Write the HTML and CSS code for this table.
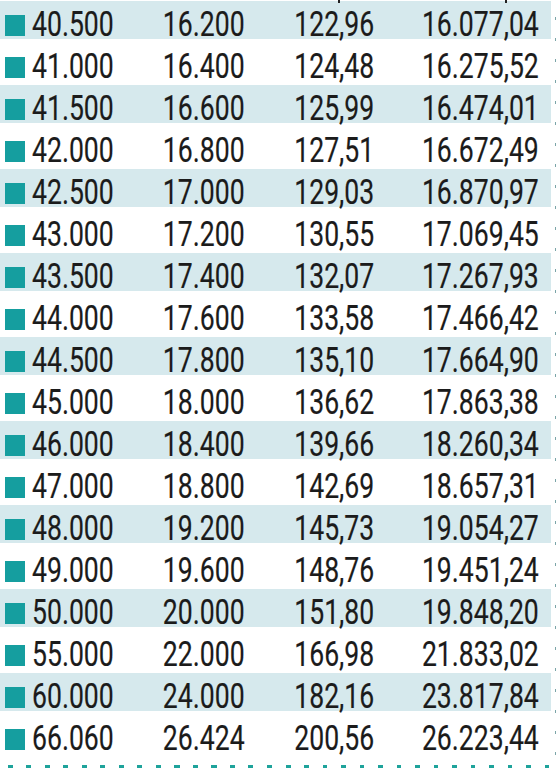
FILE: index.html
```html
<!DOCTYPE html>
<html>
<head>
<meta charset="utf-8">
<link rel="stylesheet" href="styles.css">
</head>
<body>
<div class="sheet">
  <span class="tick t1"></span><span class="tick t2"></span>
  <div class="table">
    <div class="row alt"><div class="c1"><span class="sq"></span><span class="num">40.500</span></div><div class="r"><span class="num">16.200</span></div><div class="r"><span class="num">122,96</span></div><div class="r"><span class="num">16.077,04</span></div></div>
    <div class="row"><div class="c1"><span class="sq"></span><span class="num">41.000</span></div><div class="r"><span class="num">16.400</span></div><div class="r"><span class="num">124,48</span></div><div class="r"><span class="num">16.275,52</span></div></div>
    <div class="row alt"><div class="c1"><span class="sq"></span><span class="num">41.500</span></div><div class="r"><span class="num">16.600</span></div><div class="r"><span class="num">125,99</span></div><div class="r"><span class="num">16.474,01</span></div></div>
    <div class="row"><div class="c1"><span class="sq"></span><span class="num">42.000</span></div><div class="r"><span class="num">16.800</span></div><div class="r"><span class="num">127,51</span></div><div class="r"><span class="num">16.672,49</span></div></div>
    <div class="row alt"><div class="c1"><span class="sq"></span><span class="num">42.500</span></div><div class="r"><span class="num">17.000</span></div><div class="r"><span class="num">129,03</span></div><div class="r"><span class="num">16.870,97</span></div></div>
    <div class="row"><div class="c1"><span class="sq"></span><span class="num">43.000</span></div><div class="r"><span class="num">17.200</span></div><div class="r"><span class="num">130,55</span></div><div class="r"><span class="num">17.069,45</span></div></div>
    <div class="row alt"><div class="c1"><span class="sq"></span><span class="num">43.500</span></div><div class="r"><span class="num">17.400</span></div><div class="r"><span class="num">132,07</span></div><div class="r"><span class="num">17.267,93</span></div></div>
    <div class="row"><div class="c1"><span class="sq"></span><span class="num">44.000</span></div><div class="r"><span class="num">17.600</span></div><div class="r"><span class="num">133,58</span></div><div class="r"><span class="num">17.466,42</span></div></div>
    <div class="row alt"><div class="c1"><span class="sq"></span><span class="num">44.500</span></div><div class="r"><span class="num">17.800</span></div><div class="r"><span class="num">135,10</span></div><div class="r"><span class="num">17.664,90</span></div></div>
    <div class="row"><div class="c1"><span class="sq"></span><span class="num">45.000</span></div><div class="r"><span class="num">18.000</span></div><div class="r"><span class="num">136,62</span></div><div class="r"><span class="num">17.863,38</span></div></div>
    <div class="row alt"><div class="c1"><span class="sq"></span><span class="num">46.000</span></div><div class="r"><span class="num">18.400</span></div><div class="r"><span class="num">139,66</span></div><div class="r"><span class="num">18.260,34</span></div></div>
    <div class="row"><div class="c1"><span class="sq"></span><span class="num">47.000</span></div><div class="r"><span class="num">18.800</span></div><div class="r"><span class="num">142,69</span></div><div class="r"><span class="num">18.657,31</span></div></div>
    <div class="row alt"><div class="c1"><span class="sq"></span><span class="num">48.000</span></div><div class="r"><span class="num">19.200</span></div><div class="r"><span class="num">145,73</span></div><div class="r"><span class="num">19.054,27</span></div></div>
    <div class="row"><div class="c1"><span class="sq"></span><span class="num">49.000</span></div><div class="r"><span class="num">19.600</span></div><div class="r"><span class="num">148,76</span></div><div class="r"><span class="num">19.451,24</span></div></div>
    <div class="row alt"><div class="c1"><span class="sq"></span><span class="num">50.000</span></div><div class="r"><span class="num">20.000</span></div><div class="r"><span class="num">151,80</span></div><div class="r"><span class="num">19.848,20</span></div></div>
    <div class="row"><div class="c1"><span class="sq"></span><span class="num">55.000</span></div><div class="r"><span class="num">22.000</span></div><div class="r"><span class="num">166,98</span></div><div class="r"><span class="num">21.833,02</span></div></div>
    <div class="row alt"><div class="c1"><span class="sq"></span><span class="num">60.000</span></div><div class="r"><span class="num">24.000</span></div><div class="r"><span class="num">182,16</span></div><div class="r"><span class="num">23.817,84</span></div></div>
    <div class="row"><div class="c1"><span class="sq"></span><span class="num">66.060</span></div><div class="r"><span class="num">26.424</span></div><div class="r"><span class="num">200,56</span></div><div class="r"><span class="num">26.223,44</span></div></div>
    <div class="dash"></div>
  </div>
  <div class="rule"></div>
</div>
</body>
</html>
```
FILE: styles.css
```css
body {
  margin: 0;
  background: #ffffff;
  font-family: Roboto, "Open Sans", sans-serif;
  color: #1b1b1b;
}

.sheet {
  position: relative;
  width: 557px;
  height: 768px;
  overflow: hidden;
  display: flex;
}

.table {
  width: 553px;
}

.rule {
  width: 1.5px;
  margin-left: 1.5px;
  background: repeating-linear-gradient(to bottom, transparent 0 17px, #4f868a 17px 20px, transparent 20px 21px);
  opacity: 0.75;
}

.row {
  display: grid;
  grid-template-columns: 130px 115px 129px 165px;
  height: 42px;
  box-sizing: border-box;
  padding-top: 8px;
  line-height: 34px;
  font-size: 35px;
  font-weight: 400;
  -webkit-text-stroke: 0.2px #1b1b1b;
  white-space: nowrap;
}

.row.alt {
  background: linear-gradient(#d6e9ed, #d6e9ed) 0 1px / 551px 38px no-repeat;
}

.c1 {
  padding-left: 5px;
}

.sq {
  display: inline-block;
  width: 20px;
  height: 21px;
  background: #159e9f;
  margin-right: 7px;
}

.num {
  display: inline-block;
  transform: scaleX(0.76);
}

.c1 .num {
  transform-origin: left center;
}

.r {
  text-align: right;
}

.r .num {
  transform-origin: right center;
}

.dash {
  height: 3px;
  margin-top: 9px;
  background: repeating-linear-gradient(to right, transparent 0 8px, #1ea39b 8px 13px, transparent 13px 18.5px);
}

.tick {
  position: absolute;
  top: 0;
  width: 2px;
  height: 3px;
  background: #222222;
}

.t1 { left: 338px; }
.t2 { left: 505px; }
```
